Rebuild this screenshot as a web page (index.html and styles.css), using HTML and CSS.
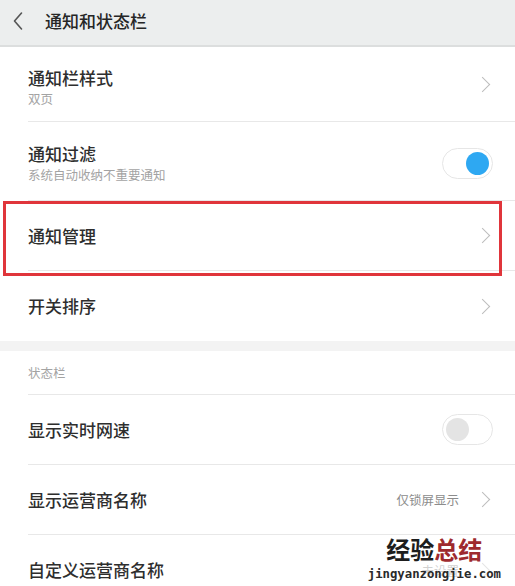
FILE: index.html
```html
<!DOCTYPE html>
<html lang="zh-CN">
<head>
    <meta charset="UTF-8">
    <meta name="viewport" content="width=device-width, initial-scale=1.0">
    <title>通知和状态栏</title>
    <link rel="stylesheet" href="styles.css">
</head>
<body>
    <header class="top-bar">
        <svg class="back-icon" width="12" height="20" viewBox="0 0 12 20">
            <path d="M9.5 2 L2.5 10 L9.5 18" fill="none" stroke="#555" stroke-width="1.6" stroke-linecap="round" stroke-linejoin="round"/>
        </svg>
        <h1 class="page-title">通知和状态栏</h1>
    </header>

    <main class="settings">
        <section class="group">
            <div class="row row-tall first">
                <div class="row-inner">
                    <div class="row-text">
                        <p class="row-title">通知栏样式</p>
                        <p class="row-sub">双页</p>
                    </div>
                    <span class="chevron"></span>
                </div>
            </div>
            <div class="row row-tall second">
                <div class="row-inner">
                    <div class="row-text">
                        <p class="row-title">通知过滤</p>
                        <p class="row-sub">系统自动收纳不重要通知</p>
                    </div>
                    <span class="switch on"><span class="knob"></span></span>
                </div>
            </div>
            <div class="row highlight">
                <div class="row-inner">
                    <div class="row-text">
                        <p class="row-title">通知管理</p>
                    </div>
                    <span class="chevron"></span>
                </div>
            </div>
            <div class="row">
                <div class="row-inner no-line">
                    <div class="row-text">
                        <p class="row-title">开关排序</p>
                    </div>
                    <span class="chevron"></span>
                </div>
            </div>
        </section>

        <div class="group-gap"></div>

        <section class="group">
            <div class="group-label">
                <div class="row-inner">
                    <p class="label-text">状态栏</p>
                </div>
            </div>
            <div class="row">
                <div class="row-inner">
                    <div class="row-text">
                        <p class="row-title">显示实时网速</p>
                    </div>
                    <span class="switch"><span class="knob"></span></span>
                </div>
            </div>
            <div class="row">
                <div class="row-inner">
                    <div class="row-text">
                        <p class="row-title">显示运营商名称</p>
                    </div>
                    <span class="row-value">仅锁屏显示</span>
                    <span class="chevron"></span>
                </div>
            </div>
            <div class="row">
                <div class="row-inner no-line">
                    <div class="row-text">
                        <p class="row-title">自定义运营商名称</p>
                    </div>
                    <span class="row-value">未设置</span>
                    <span class="chevron"></span>
                </div>
            </div>
        </section>
    </main>

    <div class="watermark">
        <div class="wm-title"><span class="wm-dark">经验</span><span class="wm-red">总结</span></div>
        <div class="wm-url">jingyanzongjie.com</div>
    </div>
</body>
</html>
```

FILE: styles.css
```css
:root {
    --text-color: #2e2e2e;
    --sub-color: #a3a3a3;
    --line-color: #e8e8e8;
    --header-bg: #eceeee;
    --accent-blue: #2ea8f2;
    --mark-red: #e0353b;
}

body {
    margin: 0;
    font-family: "Noto Sans CJK SC", "Noto Sans", sans-serif;
    background-color: #fff;
    color: var(--text-color);
    width: 515px;
    height: 586px;
    overflow: hidden;
    position: relative;
}

p {
    margin: 0;
}

.top-bar {
    height: 45px;
    background-color: var(--header-bg);
    border-bottom: 2px solid #dcdede;
    display: flex;
    align-items: center;
}

.back-icon {
    margin-left: 12px;
    margin-top: -4px;
}

.page-title {
    margin: -4px 0 0 21px;
    font-size: 17px;
    font-weight: 500;
    color: #262626;
}

.row {
    height: 70px;
    padding-left: 28px;
    box-sizing: border-box;
}

.row-tall.first {
    height: 75px;
}

.row-tall.second {
    height: 79px;
}

.row-inner {
    height: 100%;
    display: flex;
    align-items: center;
    padding-right: 22px;
    border-bottom: 1px solid var(--line-color);
    box-sizing: border-box;
}

.row-inner.no-line {
    border-bottom: none;
}

.row-text {
    flex: 1;
}

.row-title {
    font-size: 17px;
    font-weight: 500;
    line-height: 22px;
}

.row-sub {
    font-size: 12.5px;
    color: var(--sub-color);
    line-height: 17px;
    margin-top: 1px;
}

.first .row-text {
    margin-top: 6px;
}

.second .row-text {
    margin-top: 4px;
}

.row-value {
    font-size: 12.5px;
    color: #8c8c8c;
    margin-right: 18px;
}

.chevron {
    width: 10px;
    height: 10px;
    border-top: 1.5px solid #bcbcbc;
    border-right: 1.5px solid #bcbcbc;
    transform: rotate(45deg);
    margin-right: 5px;
}

.switch {
    width: 51px;
    height: 31px;
    border: 1.5px solid #e6e6e6;
    border-radius: 17px;
    box-sizing: border-box;
    display: flex;
    align-items: center;
    padding: 0 3px;
    background-color: #fff;
}

.switch .knob {
    width: 23px;
    height: 23px;
    border-radius: 50%;
    background-color: #e4e4e4;
}

.switch.on {
    justify-content: flex-end;
    margin-top: 4px;
}

.switch.on .knob {
    background-color: var(--accent-blue);
}

.highlight {
    position: relative;
}

.highlight::after {
    content: "";
    position: absolute;
    left: 3px;
    top: 0;
    width: 499px;
    height: 75px;
    border: 3px solid var(--mark-red);
    box-sizing: border-box;
}

.group-gap {
    height: 10px;
    background-color: #f3f3f3;
}

.group-label {
    height: 44px;
    padding-left: 28px;
}

.label-text {
    font-size: 12.5px;
    color: var(--sub-color);
}

.watermark {
    position: absolute;
    right: 14px;
    bottom: 4px;
    display: flex;
    flex-direction: column;
    align-items: center;
    background-color: rgba(255, 255, 255, 0.6);
}

.wm-title {
    font-size: 24px;
    font-weight: 700;
    line-height: 26px;
}

.wm-dark {
    color: #1d1d1d;
}

.wm-red {
    color: #9e2a2e;
}

.wm-url {
    font-family: "DejaVu Sans Mono", monospace;
    font-size: 12.3px;
    font-weight: 700;
    color: #2a2a2a;
    line-height: 16px;
    margin-top: 4px;
}
```
